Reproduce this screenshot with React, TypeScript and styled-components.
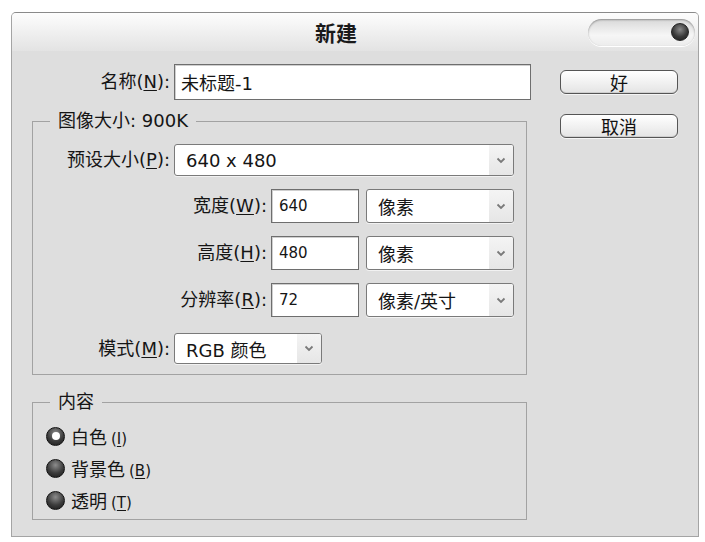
import React from "react";
import styled, { createGlobalStyle } from "styled-components";

const Global = createGlobalStyle`
  html, body { margin: 0; padding: 0; background: #ffffff; }
  body { font-family: "DejaVu Sans", "Noto Sans CJK SC", sans-serif; color: #111; }
  * { box-sizing: border-box; }
`;

const Win = styled.div`
  margin: 12px 0 0 11px;
  width: 688px;
  height: 525px;
  background: #dedede;
  border: 1px solid #a4a4a4;
  border-top-color: #8a8a8a;
  border-radius: 5px 5px 0 0;
  display: flex;
  flex-direction: column;
  overflow: hidden;
`;

const TitleBar = styled.div`
  height: 38px;
  flex: none;
  display: flex;
  align-items: center;
  background: linear-gradient(#fdfdfd, #e3e3e3);
`;

const Title = styled.div`
  flex: 1;
  text-align: center;
  padding-left: 72px;
  font-family: "Noto Sans CJK SC", sans-serif;
  font-weight: 700;
  font-size: 21px;
  line-height: 24px;
  color: #1a1a1a;
`;

const Pill = styled.div`
  width: 107px;
  height: 27px;
  margin-right: 3px;
  border-radius: 14px;
  background: linear-gradient(#d8d8d8, #f6f6f6 60%, #ececec);
  box-shadow: inset 0 1px 2px rgba(0, 0, 0, 0.35), 0 1px 0 #fff;
  display: flex;
  align-items: center;
  justify-content: flex-end;
  padding-right: 6px;
`;

const Knob = styled.div`
  width: 18px;
  height: 18px;
  border-radius: 50%;
  background: radial-gradient(circle at 50% 35%, #8a8a8a, #3a3a3a 55%, #1e1e1e);
  border: 1px solid #222;
`;

const Body = styled.div`
  flex: 1;
  display: flex;
  padding-top: 13px;
`;

const LeftCol = styled.div`
  width: 519px;
  display: flex;
  flex-direction: column;
`;

const RightCol = styled.div`
  margin-left: 29px;
  padding-top: 6px;
  display: flex;
  flex-direction: column;
  gap: 20px;
`;

const Row = styled.div<{ $h: number; $mt?: number }>`
  display: flex;
  align-items: center;
  gap: 4px;
  height: ${(p) => p.$h}px;
  margin-top: ${(p) => p.$mt ?? 0}px;
`;

const Label = styled.div<{ $w: number }>`
  width: ${(p) => p.$w}px;
  text-align: right;
  font-size: 18px;
  line-height: 22px;
  white-space: nowrap;
  color: #151515;
`;

const U = styled.span`
  text-decoration: underline;
  text-underline-offset: 2px;
`;

const TextBox = styled.div<{ $w: number; $size: number; $pad: number }>`
  width: ${(p) => p.$w}px;
  height: 100%;
  background: #fff;
  border: 1px solid #6e6e6e;
  box-shadow: inset 1px 1px 0 #cfcfcf;
  display: flex;
  align-items: center;
  padding-left: ${(p) => p.$pad}px;
  font-size: ${(p) => p.$size}px;
  color: #151515;
`;

const SelectBox = styled.div<{ $w: number; $ml: number }>`
  width: ${(p) => p.$w}px;
  margin-left: ${(p) => p.$ml}px;
  height: 100%;
  background: #fff;
  border: 1px solid #7a7a7a;
  border-radius: 3px;
  display: flex;
  align-items: stretch;
  overflow: hidden;
  box-shadow: 0 1px 0 #f2f2f2;
`;

const SelectValue = styled.div`
  flex: 1;
  display: flex;
  align-items: center;
  padding-left: 11px;
  font-size: 18px;
  color: #151515;
  white-space: nowrap;
`;

const Arrow = styled.div`
  width: 24px;
  background: linear-gradient(#f4f4f4, #e6e6e6);
  display: flex;
  align-items: center;
  justify-content: center;
`;

const Group = styled.fieldset<{ $mt: number }>`
  margin: ${(p) => p.$mt}px 0 0 20px;
  width: 495px;
  border: 1px solid #a2a2a2;
  padding: 0;
  display: flex;
  flex-direction: column;
  min-width: 0;
`;

const Legend = styled.legend`
  margin-left: 17px;
  padding: 0 8px;
  font-size: 18px;
  line-height: 20px;
  color: #151515;
`;

const GroupInner = styled.div<{ $pt: number; $pb: number; $gap: number }>`
  display: flex;
  flex-direction: column;
  gap: ${(p) => p.$gap}px;
  padding: ${(p) => p.$pt}px 0 ${(p) => p.$pb}px 0;
`;

const Button = styled.div`
  width: 118px;
  height: 24px;
  border: 1px solid #555;
  border-radius: 6px;
  background: linear-gradient(#ffffff, #e4e4e4);
  box-shadow: inset 0 -1px 0 #cfcfcf, 0 1px 0 #f5f5f5;
  display: flex;
  align-items: center;
  justify-content: center;
  font-family: "Noto Sans CJK SC", sans-serif;
  font-size: 18px;
  line-height: 20px;
  color: #111;
`;

const RadioRow = styled.div`
  display: flex;
  align-items: center;
  height: 32px;
  padding-left: 13px;
  gap: 6px;
  font-size: 18px;
  color: #151515;
`;

const RadioDot = styled.div<{ $on: boolean }>`
  width: 19px;
  height: 19px;
  border-radius: 50%;
  border: 1px solid #111;
  background: radial-gradient(circle at 50% 30%, #8c8c8c, #3c3c3c 55%, #171717);
  display: flex;
  align-items: center;
  justify-content: center;
  &::after {
    content: "";
    display: ${(p) => (p.$on ? "block" : "none")};
    width: 8px;
    height: 8px;
    border-radius: 50%;
    background: #fff;
  }
`;

const Key = styled.span`
  font-size: 15px;
  margin-left: 4px;
`;

const Chevron = () => (
  <svg width="10" height="7" viewBox="0 0 10 7">
    <path d="M1.5 1.5 L5 5 L8.5 1.5" fill="none" stroke="#7a7a7a" strokeWidth="1.8" />
  </svg>
);

const Select = ({ w, value, ml = 0 }: { w: number; value: string; ml?: number }) => (
  <SelectBox $w={w} $ml={ml}>
    <SelectValue>{value}</SelectValue>
    <Arrow>
      <Chevron />
    </Arrow>
  </SelectBox>
);

const Radio = ({ on, text, k }: { on: boolean; text: string; k: string }) => (
  <RadioRow>
    <RadioDot $on={on} />
    <span>
      {text}
      <Key>
        (<U>{k}</U>)
      </Key>
    </span>
  </RadioRow>
);

const DimField = ({ label, k, value, unit }: { label: string; k: string; value: string; unit: string }) => (
  <Row $h={34}>
    <Label $w={234}>
      {label}(<U>{k}</U>):
    </Label>
    <TextBox $w={88} $size={15} $pad={7}>
      {value}
    </TextBox>
    <Select w={148} value={unit} ml={3} />
  </Row>
);

export default function App() {
  return (
    <>
      <Global />
      <Win>
        <TitleBar>
          <Title>新建</Title>
          <Pill>
            <Knob />
          </Pill>
        </TitleBar>
        <Body>
          <LeftCol>
            <Row $h={36}>
              <Label $w={158}>
                名称(<U>N</U>):
              </Label>
              <TextBox $w={357} $size={18} $pad={6}>
                未标题-1
              </TextBox>
            </Row>
            <Group $mt={11}>
              <Legend>图像大小: 900K</Legend>
              <GroupInner $pt={13} $pb={10} $gap={13}>
                <Row $h={32}>
                  <Label $w={137}>
                    预设大小(<U>P</U>):
                  </Label>
                  <Select w={340} value="640 x 480" />
                </Row>
                <DimField label="宽度" k="W" value="640" unit="像素" />
                <DimField label="高度" k="H" value="480" unit="像素" />
                <DimField label="分辨率" k="R" value="72" unit="像素/英寸" />
                <Row $h={31} $mt={3}>
                  <Label $w={137}>
                    模式(<U>M</U>):
                  </Label>
                  <Select w={148} value="RGB 颜色" />
                </Row>
              </GroupInner>
            </Group>
            <Group $mt={17}>
              <Legend>内容</Legend>
              <GroupInner $pt={8} $pb={3} $gap={0}>
                <Radio on={true} text="白色" k="I" />
                <Radio on={false} text="背景色" k="B" />
                <Radio on={false} text="透明" k="T" />
              </GroupInner>
            </Group>
          </LeftCol>
          <RightCol>
            <Button>好</Button>
            <Button>取消</Button>
          </RightCol>
        </Body>
      </Win>
    </>
  );
}
